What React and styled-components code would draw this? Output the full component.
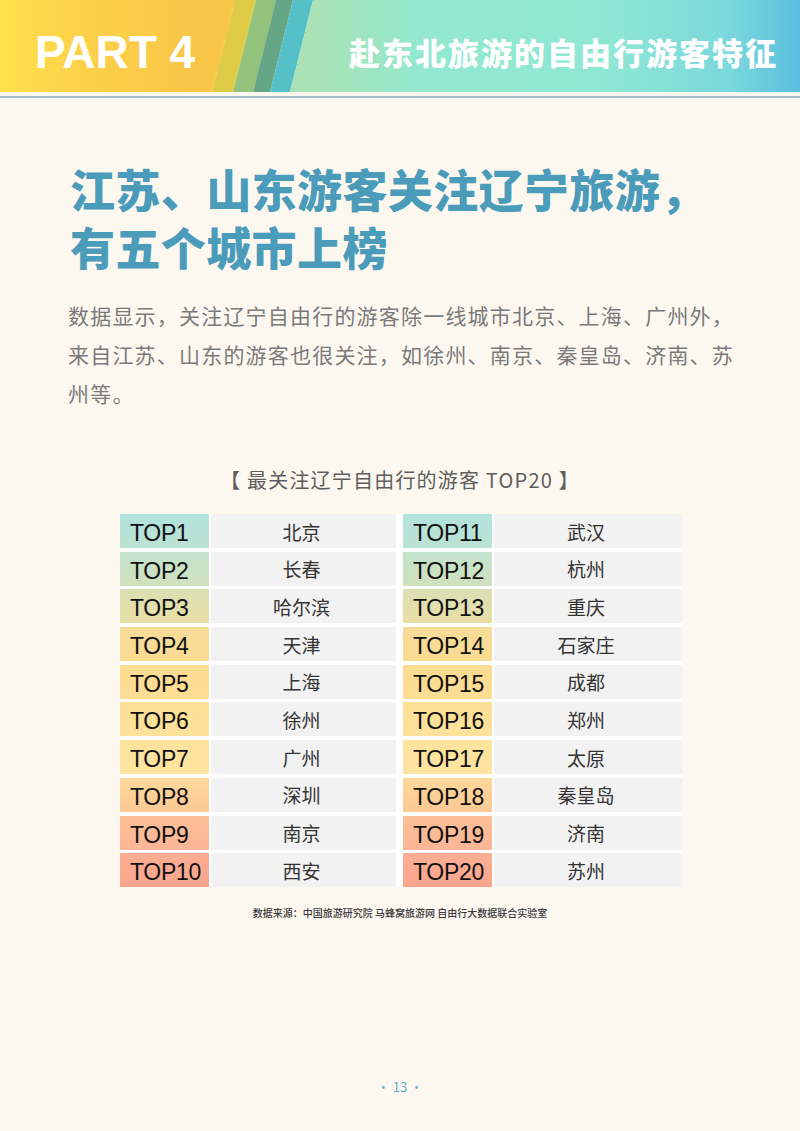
import React from "react";
import styled, { createGlobalStyle } from "styled-components";

const leftList = [
  { rank: "TOP1", city: "北京" },
  { rank: "TOP2", city: "长春" },
  { rank: "TOP3", city: "哈尔滨" },
  { rank: "TOP4", city: "天津" },
  { rank: "TOP5", city: "上海" },
  { rank: "TOP6", city: "徐州" },
  { rank: "TOP7", city: "广州" },
  { rank: "TOP8", city: "深圳" },
  { rank: "TOP9", city: "南京" },
  { rank: "TOP10", city: "西安" },
];

const rightList = [
  { rank: "TOP11", city: "武汉" },
  { rank: "TOP12", city: "杭州" },
  { rank: "TOP13", city: "重庆" },
  { rank: "TOP14", city: "石家庄" },
  { rank: "TOP15", city: "成都" },
  { rank: "TOP16", city: "郑州" },
  { rank: "TOP17", city: "太原" },
  { rank: "TOP18", city: "秦皇岛" },
  { rank: "TOP19", city: "济南" },
  { rank: "TOP20", city: "苏州" },
];

// mint -> yellow -> salmon, one pair per row
const rowColors = [
  ["#b2e3dd", "#bce2d2"],
  ["#c3e3cc", "#d0e1bd"],
  ["#dbe0b4", "#e9dea5"],
  ["#f5dc98", "#fcdb92"],
  ["#fddb91", "#fddd94"],
  ["#fdde95", "#fee29b"],
  ["#fee39e", "#fee4a0"],
  ["#fed89b", "#fcc994"],
  ["#fcc096", "#fbb596"],
  ["#fbae92", "#fba58e"],
];

const Stripes = () => (
  <StripeSvg width="115" height="92" viewBox="0 0 115 92">
    <polygon points="0,0 30,0 7,92 0,92" fill="#f9c547" />
    <polygon points="30,0 51,0 28,92 7,92" fill="#dfcb45" />
    <polygon points="51,0 71,0 48,92 28,92" fill="#93c27c" />
    <polygon points="71,0 88,0 65,92 48,92" fill="#64a686" />
    <polygon points="88,0 108,0 85,92 65,92" fill="#55c0c8" />
    <polygon points="108,0 115,0 115,92 85,92" fill="#a8e2b5" />
  </StripeSvg>
);

const RankColumn = ({ list }) => (
  <Column>
    {list.map((it, i) => (
      <Row key={it.rank}>
        <RankCell $from={rowColors[i][0]} $to={rowColors[i][1]}>
          {it.rank}
        </RankCell>
        <CityCell>{it.city}</CityCell>
      </Row>
    ))}
  </Column>
);

const App = () => {
  return (
    <Page>
      <GlobalStyle />
      <Banner>
        <PartBlock>PART 4</PartBlock>
        <Stripes />
        <TitleBlock>赴东北旅游的自由行游客特征</TitleBlock>
      </Banner>
      <Rule />
      <Content>
        <Heading>
          江苏、山东游客关注辽宁旅游，
          <br />
          有五个城市上榜
        </Heading>
        <Paragraph>
          数据显示，关注辽宁自由行的游客除一线城市北京、上海、广州外，来自江苏、山东的游客也很关注，如徐州、南京、秦皇岛、济南、苏州等。
        </Paragraph>
        <Caption>【&nbsp;最关注辽宁自由行的游客 TOP20&nbsp;】</Caption>
        <Table>
          <RankColumn list={leftList} />
          <RankColumn list={rightList} />
        </Table>
        <Source>数据来源：中国旅游研究院 马蜂窝旅游网 自由行大数据联合实验室</Source>
      </Content>
      <PageNumber>· 13 ·</PageNumber>
    </Page>
  );
};

export default App;

const GlobalStyle = createGlobalStyle`
  body {
    margin: 0;
    background: #fdf8ef;
    font-family: "Noto Sans CJK SC", "Liberation Sans", sans-serif;
  }
`;

const Page = styled.div`
  width: 800px;
  min-height: 1131px;
  display: flex;
  flex-direction: column;
  background: #fdf8ef;
  overflow: hidden;
`;

// Banner
const Banner = styled.header`
  display: flex;
  height: 92px;
`;

const PartBlock = styled.div`
  width: 205px;
  box-sizing: border-box;
  display: flex;
  align-items: center;
  padding: 12px 0 0 35px;
  background: linear-gradient(90deg, #ffe04c 0%, #fcd049 45%, #f9c547 100%);
  color: #fff;
  font-family: "Liberation Sans", Arial, sans-serif;
  font-weight: 700;
  font-size: 46px;
  line-height: 1;
  white-space: nowrap;
`;

const StripeSvg = styled.svg`
  display: block;
  flex-shrink: 0;
`;

const TitleBlock = styled.div`
  flex: 1;
  display: flex;
  align-items: center;
  justify-content: flex-end;
  padding: 10px 22px 0 0;
  background: linear-gradient(
    90deg,
    #a8e2b5 0%,
    #94e8cf 20%,
    #8fe7d3 60%,
    #7bd8dc 85%,
    #5bbfe0 100%
  );
  color: #fff;
  font-weight: 900;
  font-size: 31px;
  letter-spacing: 2px;
  line-height: 1;
  white-space: nowrap;
`;

const Rule = styled.div`
  height: 2px;
  margin-top: 4px;
  background: #a3bdd0;
`;

// Body
const Content = styled.main`
  display: flex;
  flex-direction: column;
  padding: 0 0 0 68px;
`;

const Heading = styled.h1`
  margin: 62px 0 0 2px;
  font-size: 45px;
  font-weight: 900;
  line-height: 58px;
  letter-spacing: 0.4px;
  color: #4b9bbb;
`;

const Paragraph = styled.p`
  width: 670px;
  margin: 20px 0 0;
  font-size: 21px;
  line-height: 39px;
  letter-spacing: 1.2px;
  color: #7a7a7a;
`;

const Caption = styled.div`
  margin: 54px 0 0 -68px;
  text-align: center;
  font-size: 20px;
  line-height: 26px;
  letter-spacing: 1.2px;
  color: #5e5e5e;
`;

// Table
const Table = styled.div`
  display: grid;
  grid-template-columns: 276px 279px;
  column-gap: 7px;
  margin: 21px 0 0 52px;
  width: 562px;
  background: #fff;
`;

const Column = styled.div`
  display: grid;
  row-gap: 3.7px;
`;

const Row = styled.div`
  display: grid;
  grid-template-columns: 89px 1fr;
  column-gap: 2px;
  height: 34px;
`;

const RankCell = styled.div`
  display: flex;
  align-items: center;
  padding: 5px 0 0 10px;
  box-sizing: border-box;
  background: linear-gradient(180deg, ${(p) => p.$from}, ${(p) => p.$to});
  color: #111;
  font-family: "Liberation Sans", Arial, sans-serif;
  font-size: 23px;
  letter-spacing: -0.3px;
`;

const CityCell = styled.div`
  display: flex;
  align-items: center;
  justify-content: center;
  padding-right: 4px;
  background: #f2f2f2;
  color: #333;
  font-size: 19px;
`;

const Source = styled.div`
  margin: 19px 0 0 -68px;
  text-align: center;
  font-size: 10px;
  line-height: 14px;
  color: #3a3a3a;
  font-weight: 500;
`;

const PageNumber = styled.div`
  margin-top: auto;
  padding-bottom: 36px;
  text-align: center;
  font-size: 13px;
  line-height: 16px;
  color: #5ab0cc;
`;
